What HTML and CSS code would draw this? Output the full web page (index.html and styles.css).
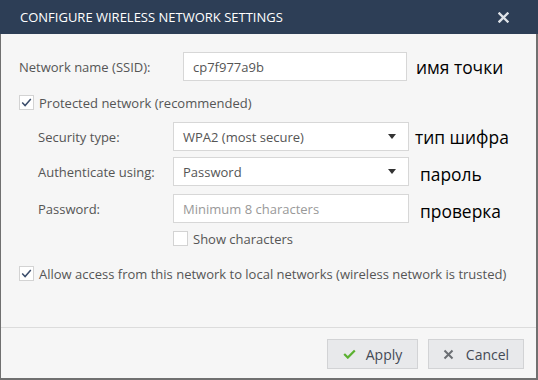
FILE: index.html
```html
<!DOCTYPE html>
<html lang="en">
<head>
  <meta charset="UTF-8">
  <title>Configure Wireless Network Settings</title>
  <link rel="stylesheet" href="styles.css">
</head>
<body>
  <div class="dialog">
    <div class="header">
      <span class="title">Configure wireless network settings</span>
      <svg class="close" width="11" height="11" viewBox="0 0 11 11"><path d="M1.5 1.5l8 8M9.5 1.5l-8 8" stroke="#dfe3e8" stroke-width="2.4" stroke-linecap="square"/></svg>
    </div>
    <div class="panel">
      <div class="content">
        <div class="row">
          <label class="label">Network name (SSID):</label>
          <div class="field ssid">cp7f977a9b</div>
          <span class="note">имя точки</span>
        </div>

        <div class="check-row first">
          <span class="box checked">
            <svg width="11" height="9" viewBox="0 0 11 9"><path d="M1.2 4.6l2.9 3 5.7-6.6" fill="none" stroke="#3b4d6b" stroke-width="1.5"/></svg>
          </span>
          <span>Protected network (recommended)</span>
        </div>

        <div class="sub">
          <div class="row">
            <label class="label short">Security type:</label>
            <div class="field select">WPA2 (most secure)<span class="arrow"></span></div>
            <span class="note tight">тип шифра</span>
          </div>
          <div class="row gap6">
            <label class="label short">Authenticate using:</label>
            <div class="field select">Password<span class="arrow"></span></div>
            <span class="note pad">пароль</span>
          </div>
          <div class="row gap8">
            <label class="label short">Password:</label>
            <div class="field wide placeholder">Minimum 8 characters</div>
            <span class="note pad">проверка</span>
          </div>
          <div class="check-row show">
            <span class="box"></span>
            <span>Show characters</span>
          </div>
        </div>

        <div class="check-row allow">
          <span class="box checked">
            <svg width="11" height="9" viewBox="0 0 11 9"><path d="M1.2 4.6l2.9 3 5.7-6.6" fill="none" stroke="#3b4d6b" stroke-width="1.5"/></svg>
          </span>
          <span>Allow access from this network to local networks (wireless network is trusted)</span>
        </div>
      </div>

      <div class="footer">
        <button class="btn apply">
          <svg width="13" height="10" viewBox="0 0 13 10"><path d="M1.2 5l3.6 3.6L11.8 1.4" fill="none" stroke="#5bb130" stroke-width="2.2"/></svg>
          Apply
        </button>
        <button class="btn cancel">
          <svg width="11" height="11" viewBox="0 0 11 11"><path d="M1.5 1.5l8 8M9.5 1.5l-8 8" stroke="#6b6e73" stroke-width="2"/></svg>
          Cancel
        </button>
      </div>
    </div>
  </div>
</body>
</html>
```

FILE: styles.css
```css
* {
  margin: 0;
  padding: 0;
  box-sizing: border-box;
}

body {
  width: 538px;
  height: 380px;
  overflow: hidden;
  background: #f6f6f6;
  font-family: 'Open Sans', 'Noto Sans', sans-serif;
  font-size: 13px;
  color: #555;
}

.dialog {
  display: flex;
  flex-direction: column;
  width: 538px;
  height: 380px;
}

.header {
  display: flex;
  align-items: center;
  justify-content: space-between;
  height: 34px;
  padding: 0 29px 0 20px;
  background: #2d3e56;
  color: #fff;
}

.title {
  font-size: 13px;
  text-transform: uppercase;
}

.panel {
  flex: 1;
  display: flex;
  flex-direction: column;
  border-left: 1px solid #707070;
  border-right: 2px solid #707070;
  border-bottom: 2px solid #707070;
  background: #f6f6f6;
}

.content {
  padding: 18px 0 0 18px;
}

.row {
  display: flex;
  align-items: center;
  height: 29px;
}

.gap6 {
  margin-top: 6px;
}

.gap8 {
  margin-top: 8px;
}

.label {
  width: 164px;
  flex-shrink: 0;
}

.label.short {
  width: 135px;
}

.field {
  display: flex;
  align-items: center;
  height: 29px;
  width: 236px;
  padding: 0 9px;
  background: #fff;
  border: 1px solid #d7d7d7;
  color: #555;
}

.field.ssid {
  width: 224px;
}

.placeholder {
  color: #999;
}

.select {
  justify-content: space-between;
}

.arrow {
  width: 0;
  height: 0;
  margin-right: 3px;
  border-left: 4px solid transparent;
  border-right: 4px solid transparent;
  border-top: 5px solid #333;
}

.note {
  margin-left: 9px;
  font-size: 17.4px;
  color: #000;
}

.note.tight {
  margin-left: 6px;
}

.note.pad {
  margin-left: 11px;
  margin-top: 5px;
}

.check-row {
  display: flex;
  align-items: center;
  height: 15px;
  gap: 5px;
}

.check-row.first {
  margin-top: 14px;
}

.box {
  display: flex;
  align-items: center;
  justify-content: center;
  width: 15px;
  height: 15px;
  background: #fff;
  border: 1px solid #d3d3d3;
}

.sub {
  margin-top: 12px;
  padding-left: 19px;
}

.check-row.show {
  margin-top: 8px;
  padding-left: 135px;
}

.check-row.allow {
  margin-top: 20px;
}

.footer {
  display: flex;
  justify-content: flex-end;
  gap: 10px;
  margin-top: auto;
  height: 51px;
  padding: 11px 12px 0 0;
  border-top: 1px solid #dcdcdc;
}

.btn {
  display: flex;
  align-items: center;
  justify-content: center;
  gap: 10px;
  height: 30px;
  background: #e8e9eb;
  border: 1px solid #d2d3d5;
  font-family: 'Open Sans', 'Noto Sans', sans-serif;
  font-size: 14px;
  color: #444a55;
}

.btn.apply {
  width: 91px;
}

.btn.cancel {
  width: 96px;
  gap: 12px;
}
```
